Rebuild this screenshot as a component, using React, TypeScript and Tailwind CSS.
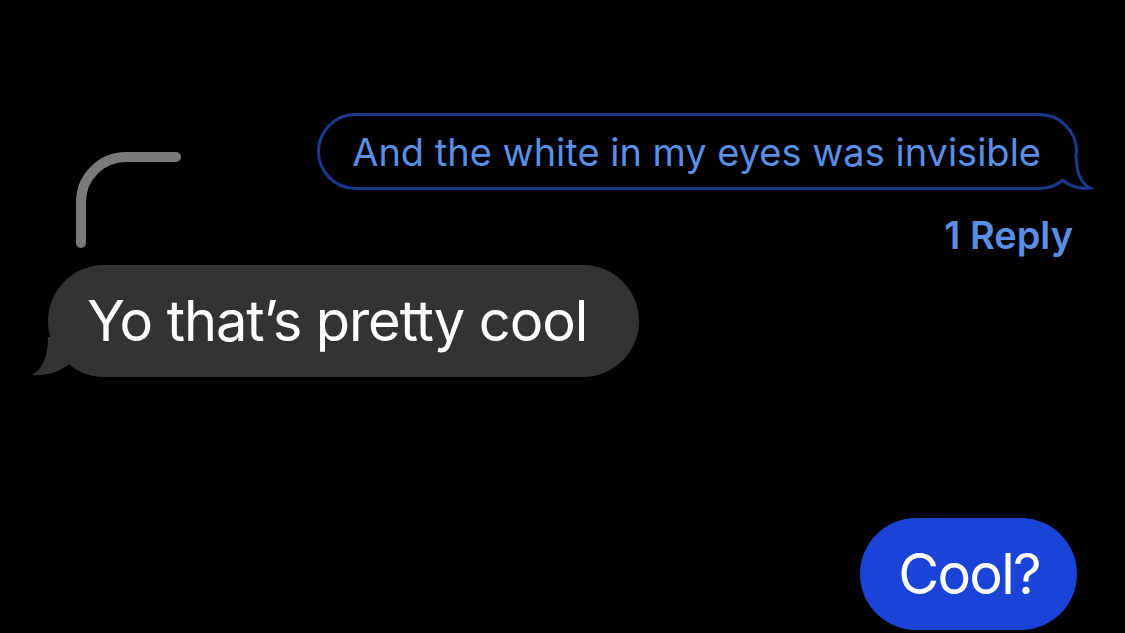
import React from "react";

export default function App() {
  return (
    <div
      className="relative w-[1125px] h-[633px] bg-black overflow-hidden flex flex-col"
      style={{ fontFamily: "Inter, 'Noto Sans', sans-serif" }}
    >
      {/* thread connector arc */}
      <svg
        className="absolute left-0 top-0 pointer-events-none"
        width="260"
        height="260"
        viewBox="0 0 260 260"
      >
        <path
          d="M81 243 V202 A45 45 0 0 1 126 157 H176"
          fill="none"
          stroke="#7a7a7a"
          strokeWidth="10"
          strokeLinecap="round"
        />
      </svg>

      {/* outlined reply bubble */}
      <div className="self-end mr-[47px] mt-[113px] relative">
        <div className="h-[77px] border-[3px] border-[#1c3a8c] rounded-[39px] pl-[32px] pr-[34px] flex items-center text-[38px] leading-none text-[#5b8fe6] whitespace-nowrap">
          And the white in my eyes was invisible
        </div>
        <svg
          className="absolute right-[-14px] bottom-0"
          width="40"
          height="31"
          viewBox="0 0 40 31"
          overflow="visible"
        >
          <path
            d="M24.5 0 C24.5 14 29 24 38 29 C30 30.5 19 28 11 21.5 L0 0 Z"
            fill="#000"
          />
          <path
            d="M24.5 0 C24.5 14 29 24 38 29 C30 30.5 19 28 11 21.5"
            fill="none"
            stroke="#1c3a8c"
            strokeWidth="3"
            strokeLinecap="round"
          />
        </svg>
      </div>

      {/* reply count */}
      <div className="self-end mr-[52px] mt-[26px] text-[38px] leading-none font-semibold text-[#5b8fe6]">
        1 Reply
      </div>

      {/* incoming grey bubble */}
      <div className="self-start ml-[48px] mt-[11px] relative">
        <svg
          className="absolute left-[-16px] bottom-0"
          width="40"
          height="40"
          viewBox="0 0 40 40"
        >
          <path
            d="M16 0 C16 22 9 33 0 38 C12 39.5 26 35 36 28 L40 0 Z"
            fill="#333335"
          />
        </svg>
        <div className="relative h-[112px] rounded-[56px] bg-[#333335] pl-[39px] pr-[52px] flex items-center text-[56px] leading-none tracking-[-1.1px] text-white whitespace-nowrap">
          Yo that’s pretty cool
        </div>
      </div>

      {/* outgoing blue bubble */}
      <div className="self-end mr-[48px] mt-[141px] h-[112px] rounded-[56px] bg-[#1b43d6] pl-[38px] pr-[37px] flex items-center text-[56px] leading-none tracking-[-1.7px] text-white whitespace-nowrap">
        Cool?
      </div>
    </div>
  );
}
